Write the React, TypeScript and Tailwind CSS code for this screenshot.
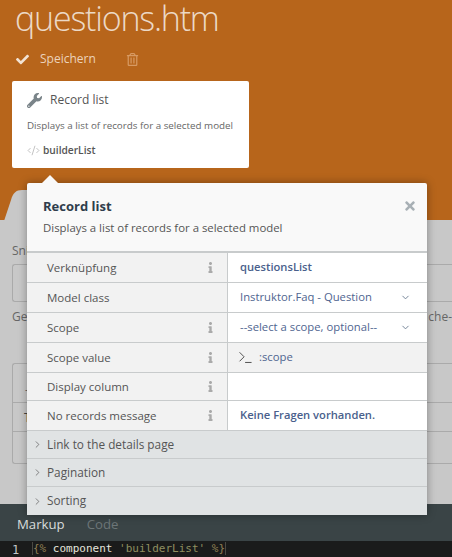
import { FaCheck, FaInfo, FaRegTrashAlt, FaTimes, FaWrench } from 'react-icons/fa';
import { ChevronDown, ChevronRight, CodeXml, Terminal } from 'lucide-react';

const rows = [
  { label: 'Verknüpfung', info: true, value: 'questionsList', kind: 'strong', height: 'h-[30px]' },
  { label: 'Model class', info: false, value: 'Instruktor.Faq - Question', kind: 'select', height: 'h-[30px]' },
  { label: 'Scope', info: true, value: '--select a scope, optional--', kind: 'select', height: 'h-[30px]' },
  { label: 'Scope value', info: true, value: ':scope', kind: 'terminal', height: 'h-[30px]' },
  { label: 'Display column', info: true, value: '', kind: 'strong', height: 'h-[28px]' },
  { label: 'No records message', info: true, value: 'Keine Fragen vorhanden.', kind: 'strong', height: 'h-[30px]' },
];

const groups = ['Link to the details page', 'Pagination', 'Sorting'];

function InspectorRow({ row }: { row: (typeof rows)[number] }) {
  return (
    <div className={`flex ${row.height} border-b border-[#c8cbcc]`}>
      <div className="flex w-[201px] items-center justify-between border-r border-[#c8cbcc] bg-[#f2f2f2] pl-5 pr-[11px] text-[11.5px] text-[#555]">
        <span>{row.label}</span>
        {row.info && <FaInfo className="h-[11px] w-[11px] text-[#aaa]" />}
      </div>
      <div
        className={`flex flex-1 items-center justify-between pr-4 text-[11.3px] ${
          row.kind === 'terminal' ? 'bg-[#f2f2f2] pl-[9px]' : 'bg-white pl-3'
        }`}
      >
        {row.kind === 'terminal' ? (
          <span className="flex items-center gap-[5px] text-[#4f6590]">
            <Terminal className="h-[17px] w-[17px] text-[#444]" strokeWidth={1.3} />
            {row.value}
          </span>
        ) : (
          <span className={row.kind === 'strong' ? 'text-[11.2px] font-semibold text-[#4a5f8c]' : 'text-[#4f6590]'}>{row.value}</span>
        )}
        {row.kind === 'select' && <ChevronDown className="h-[11px] w-[11px] text-[#6b7d92]" strokeWidth={2} />}
      </div>
    </div>
  );
}

export default function App() {
  return (
    <div className="relative flex h-[557px] w-[452px] flex-col overflow-hidden bg-[#c8c8c8] font-['Open_Sans',sans-serif]">
      {/* Header */}
      <div className="h-[220px] shrink-0 bg-[#b7651b] pl-[12px]">
        <h1 className="pl-[3px] text-[34px] font-light leading-[36px] tracking-[-1.2px] text-[#ecd9c6]">questions.htm</h1>
        <div className="mt-[11px] flex h-[24px] items-center pl-[4px] text-[12px] text-[#ecd3bb]">
          <FaCheck className="h-[13px] w-[13px] text-[#f2e3d4]" />
          <span className="ml-[11px]">Speichern</span>
          <FaRegTrashAlt className="ml-[30px] h-[13px] w-[13px] text-[#d79a63]" />
        </div>
        <div className="mt-[10px] h-[87px] w-[237px] rounded-[2px] bg-white px-[15px] pt-[10px]">
          <div className="flex items-center gap-[8px] text-[12px] text-[#555]">
            <FaWrench className="h-[15px] w-[15px] text-[#7a8489]" />
            <span>Record list</span>
          </div>
          <p className="mt-[10px] text-[9.8px] leading-[14px] text-[#666]">Displays a list of records for a selected model</p>
          <div className="mt-[10px] flex items-center gap-[3px] text-[10.2px] font-semibold text-[#555]">
            <CodeXml className="h-[13px] w-[13px] font-normal text-[#aaa]" strokeWidth={1.3} />
            builderList
          </div>
        </div>
      </div>

      {/* Page behind the popover */}
      <div className="flex-1 px-[12px] text-[12px] text-[#666]">
        <div className="mt-[22px] leading-[18px]">Snippet</div>
        <div className="mt-[4px] h-[38px] w-[calc(100%+12px)] rounded-l-[3px] border border-r-0 border-[#aaa]" />
        <div className="mt-[6px] flex justify-between leading-[18px]">
          <span>Ge</span>
          <span className="-mr-[12px]">che-</span>
        </div>
        <div className="mt-[37px] h-[101px] w-[calc(100%+12px)] rounded-l-[3px] border border-r-0 border-[#aaa]">
          <div className="h-[39px] border-b border-[#aaa] pl-[12px] pt-[17px]">-</div>
          <div className="h-[29px] border-b border-[#aaa] pl-[11px] pt-[6px] font-medium text-[#444]">T</div>
        </div>
      </div>

      {/* Editor */}
      <div className="flex h-[37px] shrink-0 items-center gap-[22px] bg-[#3a4446] pl-[17px] pt-[4px] text-[13.2px]">
        <span className="text-[#d8dcdc]">Markup</span>
        <span className="text-[#6d7678]">Code</span>
      </div>
      <div className="flex h-[16px] shrink-0 items-center bg-[#1a1b1b] pt-[1px] font-['DejaVu_Sans_Mono',monospace] text-[11px]">
        <span className="w-[32px] pl-[12px] text-[12px] text-[#c4c8c8]">1</span>
        <span className="whitespace-pre text-[#e4e4dc]">
          <span className="border-l border-[#4a4a44] text-[#8f7f54]">{'{%'}</span> component{' '}
          <span className="text-[#8f8f60]">'builderList'</span>{' '}
          <span className="border-r border-[#4a4a44] text-[#8f7f54]">{'%}'}</span>
        </span>
      </div>

      {/* Tab edge under the popover */}
      <svg className="absolute left-0 top-[188px]" width="30" height="33" viewBox="0 0 30 33">
        <path d="M4 33 L11 12 C13 5 16 2 22 2 L30 2 L30 33 Z" fill="#c8c8c8" />
      </svg>

      {/* Popover */}
      <div className="absolute left-[27px] top-[183px] w-[400px] rounded-[2px] bg-[#f9f9f9] shadow-[0_0_8px_rgba(0,0,0,0.35)]">
        <div className="absolute -top-[8px] left-[15px] h-0 w-0 border-x-[8px] border-b-[8px] border-x-transparent border-b-[#f9f9f9]" />
        <div className="relative h-[70px] border-b-2 border-[#c8cbcc] px-[16px] pt-[13px]">
          <div className="text-[13px] font-bold leading-[20px] text-[#2f3d4c]">Record list</div>
          <div className="mt-[3px] text-[11.4px] leading-[18px] text-[#555]">Displays a list of records for a selected model</div>
          <FaTimes className="absolute right-[10px] top-[16px] h-[14px] w-[14px] text-[#a8b0b5]" />
        </div>
        {rows.map((row) => (
          <InspectorRow key={row.label} row={row} />
        ))}
        {groups.map((group) => (
          <div
            key={group}
            className="flex h-[28px] items-center gap-[4px] border-b border-[#c8cbcc] bg-[#e0e3e4] pl-[5px] text-[11.8px] text-[#555] last:border-b-0"
          >
            <ChevronRight className="h-[11px] w-[11px] text-[#555]" strokeWidth={1.5} />
            <span>{group}</span>
          </div>
        ))}
      </div>
    </div>
  );
}
